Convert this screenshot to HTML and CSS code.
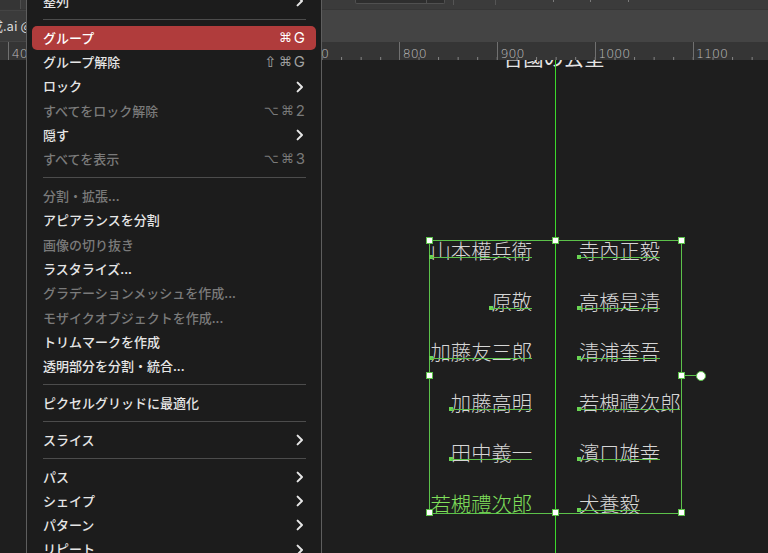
FILE: index.html
```html
<!DOCTYPE html>
<html lang="ja">
<head>
<meta charset="utf-8">
<title>Illustrator オブジェクトメニュー</title>
<link rel="stylesheet" href="styles.css">
</head>
<body>
<div class="app">
  <div class="topbar">
    <div class="tb-left"></div>
    <div class="tb-ctrl"><span class="tb-seg"></span></div>
    <span class="tb-line l1"></span>
    <span class="tb-line l2"></span>
    <span class="tb-tick t1"></span>
    <span class="tb-tick t2"></span>
    <span class="tb-tick t3"></span>
  </div>
  <div class="tabbar">
    <div class="tab">成.ai @ 100 % (RGB/プレビュー)</div>
  </div>
  <div class="ruler">
    <div class="rcell"><span>300</span></div>
    <div class="rcell"><span>400</span></div>
    <div class="rcell"><span>500</span></div>
    <div class="rcell"><span>600</span></div>
    <div class="rcell"><span>700</span></div>
    <div class="rcell"><span>800</span></div>
    <div class="rcell"><span>900</span></div>
    <div class="rcell"><span>1000</span></div>
    <div class="rcell"><span>1100</span></div>
    <div class="rcell"><span>1200</span></div>
  </div>
  <div class="canvas">
    <div class="title">合國の公呈</div>
    <div class="selection">
      <div class="names">
        <div class="cell l"><span class="nm">山本權兵衛</span></div>
        <div class="cell r"><span class="nm">寺內正毅</span></div>
        <div class="cell l"><span class="nm">原敬</span></div>
        <div class="cell r"><span class="nm">高橋是清</span></div>
        <div class="cell l"><span class="nm">加藤友三郎</span></div>
        <div class="cell r"><span class="nm">清浦奎吾</span></div>
        <div class="cell l"><span class="nm">加藤高明</span></div>
        <div class="cell r"><span class="nm">若槻禮次郎</span></div>
        <div class="cell l"><span class="nm">田中義一</span></div>
        <div class="cell r"><span class="nm">濱口雄幸</span></div>
        <div class="cell l"><span class="nm sel">若槻禮次郎</span></div>
        <div class="cell r"><span class="nm">犬養毅</span></div>
      </div>
      <span class="h h-tl"></span>
      <span class="h h-tr"></span>
      <span class="h h-ml"></span>
      <span class="h h-mr"></span>
      <span class="h h-bl"></span>
      <span class="h h-br"></span>
      <span class="rot-line"></span>
      <span class="rot-knob"></span>
    </div>
    <svg class="guide" width="2" height="493" viewBox="0 0 2 493"><rect x="0" y="0" width="1" height="493"/></svg>
    <div class="selection-mid">
      <span class="h h-tc"></span>
      <span class="h h-bc"></span>
    </div>
  </div>
</div>

<div class="menu">
  <div class="item"><span class="label">整列</span><svg class="chev" viewBox="0 0 8 12" width="8" height="12"><polyline points="1.6,1.6 6,6 1.6,10.4"/></svg></div>
  <div class="sep"></div>
  <div class="item active"><span class="label">グループ</span><span class="kbd"><span class="sym">⌘</span>G</span></div>
  <div class="item"><span class="label">グループ解除</span><span class="kbd dim"><span class="sym big">⇧</span><span class="sym">⌘</span>G</span></div>
  <div class="item"><span class="label">ロック</span><svg class="chev" viewBox="0 0 8 12" width="8" height="12"><polyline points="1.6,1.6 6,6 1.6,10.4"/></svg></div>
  <div class="item off"><span class="label">すべてをロック解除</span><span class="kbd"><span class="sym">⌥</span><span class="sym">⌘</span>2</span></div>
  <div class="item"><span class="label">隠す</span><svg class="chev" viewBox="0 0 8 12" width="8" height="12"><polyline points="1.6,1.6 6,6 1.6,10.4"/></svg></div>
  <div class="item off"><span class="label">すべてを表示</span><span class="kbd"><span class="sym">⌥</span><span class="sym">⌘</span>3</span></div>
  <div class="sep"></div>
  <div class="item off"><span class="label">分割・拡張...</span></div>
  <div class="item"><span class="label">アピアランスを分割</span></div>
  <div class="item off"><span class="label">画像の切り抜き</span></div>
  <div class="item"><span class="label">ラスタライズ...</span></div>
  <div class="item off"><span class="label">グラデーションメッシュを作成...</span></div>
  <div class="item off"><span class="label">モザイクオブジェクトを作成...</span></div>
  <div class="item"><span class="label">トリムマークを作成</span></div>
  <div class="item"><span class="label">透明部分を分割・統合...</span></div>
  <div class="sep"></div>
  <div class="item"><span class="label">ピクセルグリッドに最適化</span></div>
  <div class="sep"></div>
  <div class="item"><span class="label">スライス</span><svg class="chev" viewBox="0 0 8 12" width="8" height="12"><polyline points="1.6,1.6 6,6 1.6,10.4"/></svg></div>
  <div class="sep"></div>
  <div class="item"><span class="label">パス</span><svg class="chev" viewBox="0 0 8 12" width="8" height="12"><polyline points="1.6,1.6 6,6 1.6,10.4"/></svg></div>
  <div class="item"><span class="label">シェイプ</span><svg class="chev" viewBox="0 0 8 12" width="8" height="12"><polyline points="1.6,1.6 6,6 1.6,10.4"/></svg></div>
  <div class="item"><span class="label">パターン</span><svg class="chev" viewBox="0 0 8 12" width="8" height="12"><polyline points="1.6,1.6 6,6 1.6,10.4"/></svg></div>
  <div class="item"><span class="label">リピート</span><svg class="chev" viewBox="0 0 8 12" width="8" height="12"><polyline points="1.6,1.6 6,6 1.6,10.4"/></svg></div>
</div>
</body>
</html>
```

FILE: styles.css
```css
* { box-sizing: border-box; }

html, body {
  margin: 0;
  padding: 0;
}

body {
  width: 768px;
  height: 553px;
  overflow: hidden;
  position: relative;
  background: #1e1e1e;
  font-family: "Noto Sans CJK JP", "Noto Sans", sans-serif;
}

.app {
  display: flex;
  flex-direction: column;
  height: 553px;
}

/* ---------- top control strip ---------- */
.topbar {
  height: 10px;
  flex: 0 0 10px;
  background: #3b3b3b;
  display: flex;
  align-items: flex-start;
  border-bottom: 1px solid #363636;
}

.tb-left {
  width: 21px;
  height: 9px;
  background: #353535;
  border-right: 1px solid #4e4e4e;
}

.tb-ctrl {
  margin-left: 334px;
  width: 90px;
  height: 4px;
  background: #2e2e2e;
  border: 1px solid #505050;
  border-top: 0;
  border-radius: 0 0 2px 2px;
}

.tb-seg {
  display: block;
  margin-left: 70px;
  width: 1px;
  height: 3px;
  background: #505050;
}

.tb-line {
  width: 1px;
  height: 5px;
  background: #555555;
}
.tb-line.l1 { margin-left: 8px; }
.tb-line.l2 { margin-left: 41px; }

.tb-tick {
  width: 1px;
  height: 2px;
  background: #7a7a7a;
}
.tb-tick.t1 { margin-left: 57px; }
.tb-tick.t2 { margin-left: 36px; }
.tb-tick.t3 { margin-left: 37px; }

/* ---------- document tab bar ---------- */
.tabbar {
  height: 32px;
  flex: 0 0 32px;
  background: #444444;
  display: flex;
}

.tab {
  margin-left: -10px;
  width: 260px;
  height: 30px;
  margin-top: 1px;
  background: #3b3b3b;
  color: #dcdcdc;
  font-size: 13px;
  line-height: 30px;
  white-space: nowrap;
  overflow: hidden;
}

/* ---------- ruler ---------- */
.ruler {
  height: 18px;
  flex: 0 0 18px;
  background: #353535;
  display: flex;
  overflow: hidden;
}

.rcell {
  flex: 0 0 97.75px;
  height: 18px;
  border-left: 1px solid #707070;
  padding-left: 2.5px;
  padding-top: 3px;
  color: #bdbdbd;
  font-family: "DejaVu Sans", sans-serif;
  font-weight: 200;
  font-size: 12.5px;
  line-height: 18px;
  white-space: nowrap;
  background: linear-gradient(to right, #858585 1px, transparent 1px) 18.55px 100% / 19.55px 3px repeat-x;
}
.rcell:first-child { margin-left: -89.45px; }

/* ---------- canvas ---------- */
.canvas {
  flex: 1;
  position: relative;
  overflow: hidden;
  background: #1e1e1e;
}

.title {
  position: absolute;
  left: 503px;
  top: -13px;
  font-size: 20.3px;
  line-height: 20px;
  color: #e4e4e4;
  white-space: nowrap;
}

.guide {
  position: absolute;
  left: 555px;
  top: 0;
  display: block;
  fill: #3cd82c;
  shape-rendering: crispEdges;
}

.selection {
  position: absolute;
  left: 429px;
  top: 180px;
  width: 253px;
  height: 274px;
  border: 1px solid #5cc24a;
}

.selection-mid {
  position: absolute;
  left: 429px;
  top: 180px;
  width: 253px;
  height: 274px;
  border: 1px solid transparent;
}

.names {
  display: grid;
  grid-template-columns: 125px 126px;
  grid-auto-rows: 50.5px;
  margin-top: -1px;
}

.cell { display: flex; align-items: flex-start; }
.cell.l { justify-content: flex-end; padding-right: 23px; }
.cell.r { justify-content: flex-start; padding-left: 24px; }

.nm {
  position: relative;
  display: block;
  height: 20px;
  font-size: 20.3px;
  line-height: 20px;
  font-weight: 300;
  color: #d6d6d6;
  white-space: nowrap;
}

.nm::after {
  content: "";
  position: absolute;
  left: 0;
  right: 0;
  top: 17px;
  height: 1px;
  background: #5cc24a;
}

.nm::before {
  content: "";
  position: absolute;
  left: -2px;
  top: 15px;
  width: 4px;
  height: 4px;
  background: #6ad653;
}

.nm.sel { color: #80e05c; }
.nm.sel::after, .nm.sel::before { display: none; }

/* selection handles */
.h {
  position: absolute;
  width: 7px;
  height: 7px;
  background: #ffffff;
  border: 1px solid #5cc24a;
}
.h-tl { left: -4px; top: -4px; }
.h-tc { left: 122px; top: -4px; }
.h-tr { left: 248px; top: -4px; }
.h-ml { left: -4px; top: 131px; }
.h-mr { left: 248px; top: 131px; }
.h-bl { left: -4px; top: 268px; }
.h-bc { left: 122px; top: 268px; }
.h-br { left: 248px; top: 268px; }

.rot-line {
  position: absolute;
  left: 255px;
  top: 134px;
  width: 12px;
  height: 1px;
  background: #5cc24a;
}

.rot-knob {
  position: absolute;
  left: 266px;
  top: 130px;
  width: 10px;
  height: 10px;
  border-radius: 50%;
  background: #ffffff;
  border: 1.5px solid #5cc24a;
}

/* ---------- context menu ---------- */
.menu {
  position: absolute;
  left: 26px;
  top: -12px;
  width: 296px;
  height: 600px;
  background: #1c1c1c;
  border: 1px solid #5e5e5e;
  border-radius: 6px;
  color: #e6e6e6;
  font-size: 13px;
  font-weight: 500;
}

.item {
  height: 24.3px;
  margin: 0 5px;
  padding: 0 11px 0 11px;
  display: flex;
  align-items: center;
  justify-content: space-between;
  border-radius: 5px;
  line-height: 24.3px;
  white-space: nowrap;
}

.item.active {
  background: #b03c3c;
  color: #ffffff;
}

.item.off { color: #7a7a7a; }

.kbd {
  font-family: "Inter", "DejaVu Sans", sans-serif;
  font-size: 15px;
  font-weight: 400;
  display: flex;
  align-items: center;
  gap: 2px;
}
.kbd.dim { color: #a0a0a0; }

.sym {
  font-family: "DejaVu Sans", sans-serif;
  font-size: 13px;
}
.sym.big { font-size: 15px; }

.chev {
  margin-right: 1px;
  fill: none;
  stroke: #e6e6e6;
  stroke-width: 2;
  stroke-linecap: round;
  stroke-linejoin: round;
}

.sep {
  height: 1px;
  margin: 5.75px 15px 5.75px 16px;
  background: #4c4c4c;
}
```
